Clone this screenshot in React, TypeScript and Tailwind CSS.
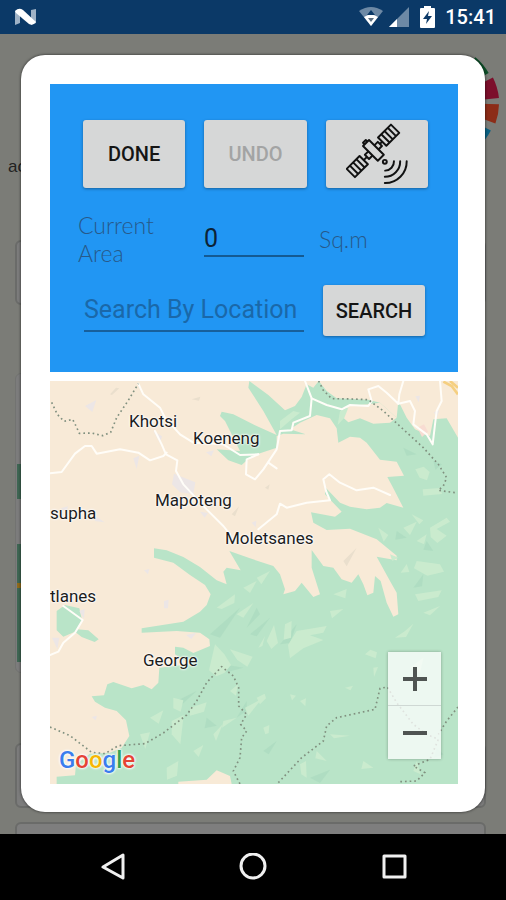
import React from "react";

const GREEN = "#b9e4c8";
const SAND = "#f8ead7";

const lightPatches = [
  "M690 120l40-30 20 5-25 20-35 30z", "M870 90l25-10-12 30-20 22z", "M1096 265l25-8 18 16-8 25-22-8z",
  "M1118 325l52-4 6 18-56 5z", "M1140 440l50-30 10 12-40 22 30 20-28 22-20-18z", "M1100 540l70 10 12 22-50 12-40-22z",
  "M1085 400l35 18-12 12z", "M1060 440l40-18-20 40z", "M1052 575l18-26 8 24z", "M985 440l30 22-14 20z",
  "M1100 480l30-20-8 30z", "M1020 520l25 10-18 10z", "M1095 640l80-12-10 20-60 12z", "M1120 695l50-20-30 28z",
  "M1035 770l30-20 25-22-22 40z", "M740 750l90-15-10 20-40 8 40 14-60 25-40 30-6-40z", "M705 730l20-10-2 50-22 6z",
  "M650 780l22-48 12 54-20 18z", "M625 800l20-35-8 30z", "M840 690l40-6-34 28z", "M850 640l40-16-4 28z",
  "M945 820l16-14 20 8-4 18z", "M970 860l14-2-12 30z", "M620 950l24-12 4 14-18 18z", "M720 940l18 4-12 14z",
  "M750 960l18-8-2 24z", "M640 1040l18-8-2 24-10 4z", "M885 920l24-6-8 14z", "M840 1060l60 4-48 8z",
  "M495 790l28 30 20 32-20 24-24 10-22-18z", "M540 805l68 22-16 30-30-20z", "M500 680l55-40-2 26-38 18z",
  "M420 980l50-16-8 28-42 12z", "M370 950l30 8-8 34-22-10z", "M365 1020l36-18-10 88-26-30z",
  "M300 1010l40-22-14 40z", "M270 1060l30-6-14 50z", "M350 1160l35-20-4 44-30 12z", "M490 1060l28-30-20 50z",
  "M520 1020l40-10-44 30z", "M585 980l50-26-40 50z", "M430 1110l30-18-14 36z", "M560 700l50-34-30 44z",
  "M540 930l24-20-6 34z", "M750 1150l18-10 2 50-16-10z", "M800 1110l30 30-34-8z", "M940 1140l30 20-36 4z",
  "M1090 1170l10-30 12 40z", "M580 620l40-20-20 36z", "M620 590l40-20-26 40z", "M1080 860l40-30-10 46z",
];

const darkPatches = [
  "M480 760l90-80-60 90z", "M600 760l60-50-40 56z", "M520 850l60 10-50 14z", "M380 960l60-30-48 44z",
  "M590 740l30-60 10 20z", "M1040 450l30 20-34 6z", "M1130 480l20 30-30-4z", "M1150 240l26 10-20 16z",
  "M560 1010l30-50 0 30z", "M780 1190l60-24-30 40z", "M640 1110l40-30-24 40z", "M690 790l50-60-20 56z",
  "M1090 620l30-40-4 36z", "M470 1010l30 24-36 8z", "M1060 200l40 20-30 4z", "M1160 1100l20 20-28 10z",
];

const townPatches = [
  "M105 75l34-18-12 36z", "M372 278l64 26-6 36-40-6-24-24z", "M250 232l18-8-8 40z", "M310 150l26 16-6 20z",
  "M32 382l22-6-4 16z", "M140 408l24 16-30-4z", "M282 568l16-4-4 16z", "M468 214l24-6-8 18z",
  "M342 660l14-4-2 26-12 0z", "M88 690l16-6-2 30z", "M6 770l22 0-6 34z", "M408 762l30-6-14 18z",
  "M125 1008l16-4-4 14z", "M450 392l24 4-10 14z", "M605 425l14-6-2 20z", "M1096 46l14-2-4 20z", "M1152 94l16-6-8 22z",
];

const borders = [
  "M5 64L22 100 42 121 68 115 78 135 88 157 125 156 158 164 182 154 200 110 235 58 265 8",
  "M806 0L820 28 845 53 905 54 955 56 1000 90 1060 145 1120 200 1165 250 1190 290 1180 315 1165 328 1215 335",
  "M0 1038L60 1064 125 1114 165 1118 205 1094 285 1088 340 1056 410 1002 440 960 470 905 515 857 550 885 566 920 566 975 590 1000 572 1030 590 1050 575 1070 570 1130 550 1170 570 1209",
  "M685 1205L755 1130 820 1080 830 1035 860 1010 975 985 990 922 1012 918 1040 965 1090 1030 1130 1060 1165 1075 1140 1135 1090 1155 1125 1175 1100 1200 1050 1202",
  "M1224 978L1190 1020 1165 1060",
];

const roads = [
  "M0 277L35 273 75 218 105 195 125 195 140 218 210 205 265 215 300 238 340 225 350 215",
  "M265 8L280 40 330 80 345 110 390 160 430 185 520 190 570 222 625 220",
  "M315 150L335 190 348 220 382 238 378 270 400 310 470 385 520 435 540 460",
  "M625 220L590 235 588 280 615 295 640 265 680 205 690 150 725 148 730 125 780 105 785 52 765 0",
  "M785 52L830 72 875 85 900 72 955 75 965 60 955 25 985 15 1010 35 1045 68 1048 40 1060 0",
  "M1045 68L1080 60 1095 90 1090 130 1130 160 1148 190 1155 130 1160 90 1175 60 1170 0",
  "M655 245L680 262", "M625 445L680 400 690 368 710 380 770 365 840 358 828 330 820 295 838 280 870 305 920 328 970 320 1020 342",
  "M40 675L98 717 75 755 40 785 25 812 0 822",
];

function Terrain() {
  return (
    <svg className="block h-full w-full" viewBox="0 0 1224 1209" preserveAspectRatio="xMidYMid slice" aria-hidden="true">
      <rect width="1224" height="1209" fill={SAND} />
      <path fill={GREEN} d="M598 0L655 42 705 88 735 75 755 48 770 10 790 20 806 0 830 30 860 52 955 56 990 65 1040 110 1045 60 1070 110 1095 145 1140 165 1150 115 1190 112 1224 170V1209H545L540 1185 500 1168 470 1196 385 1202V1209H20V1187L75 1183 78 1150 120 1118 180 1115 215 1100 238 1065 228 1018 200 990 165 980 135 962 125 946 162 943 172 910 190 903 245 922 280 912 305 925 325 905 328 860 420 850 375 820V797L400 800 430 816 480 795 478 775 450 755 380 750 275 755V742L400 722 450 692 470 672 482 640 465 612 420 582 370 545 312 530V502L350 508 400 528 450 558 500 598 530 610 520 572 530 560 572 568 538 510 600 532 670 555 690 580 705 625 700 640 735 630 755 605 790 648 810 640 785 560 785 507 820 555 850 560 875 595 905 605 925 580 940 610 952 643 970 635 975 585 992 600 1010 665 1030 707 1045 700 1040 635 1020 600 980 527 1040 538V524L980 475 900 443 830 447 790 425 783 394 855 407 875 392 825 340 825 318 870 365 900 377 950 385 990 380 1010 366 1060 380 1030 322 1012 288 1062 284 1040 242 990 236 950 185 930 170 900 167 865 185 860 142 840 112 800 102 750 125 720 145 767 160 700 158 680 165V200L605 225 575 252 535 238 500 205 570 210 560 190 525 120 510 105 515 92 550 100 620 135 680 162 640 90 595 20z" />
      <path fill={SAND} d="M893 75L955 70 990 65 1040 110 1020 125 970 128 930 112 895 124 880 110z" />
      <path fill={GREEN} d="M20 690L45 672 88 682 96 717 80 745 115 748 146 775 134 783 95 768 75 752 40 767 20 748z" />
      {darkPatches.map((d) => <path key={d} d={d} fill="#a9d9be" opacity="0.6" />)}
      {lightPatches.map((d) => <path key={d} d={d} fill="#caebce" />)}
      {townPatches.map((d) => <path key={d} d={d} fill="#ece6e6" />)}
      <path d="M180 40l18-20 10 2-22 20zM425 55l26-8-4 12zM545 400l22-24-12 30zM645 320l14-10-4 16zM880 540l40-40-30 56z" fill="#eadfcd" />
      <path d="M1102 140l20-10 12 22-18 16z" fill="#f8dcd2" />
      {roads.map((d) => (
        <path key={d} d={d} fill="none" stroke="#fffdf8" strokeWidth="6" strokeLinejoin="round" strokeLinecap="round" />
      ))}
      <path d="M1180 2L1205 15 1224 40M1200 0L1224 20" fill="none" stroke="#f5cf80" strokeWidth="8" />
      {borders.map((d) => (
        <path key={d} d={d} fill="none" stroke="#80907f" strokeWidth="5" strokeDasharray="5 9" strokeLinejoin="round" />
      ))}
    </svg>
  );
}

function Satellite() {
  return (
    <svg className="h-[62px] w-[62px]" viewBox="914 126 190 190" fill="none" stroke="#111" strokeWidth="6" strokeLinejoin="round" aria-hidden="true">
      <g transform="translate(998 210) rotate(-45)">
        <path d="M-13-32H13V32H-13zM-6-32V-39H6V-32" />
        <path d="M13-9H28V9H13M28 0H38M-13-9H-28V9H-13M-28 0H-42" />
        <path d="M38-18H94V18H38zM52-18V18M66-18V18M80-18V18" />
        <path d="M-98-18H-42V18H-98zM-84-18V18M-70-18V18M-56-18V18" />
      </g>
      <circle cx="1033" cy="245" r="6" />
      <path strokeLinecap="round" d="M1061 243A28 28 0 0 1 1034 272M1080 243A47 47 0 0 1 1033 291M1100 243A66 66 0 0 1 1033 310" />
    </svg>
  );
}

function StatusBar() {
  return (
    <header className="flex h-[34px] items-center bg-[#0b3967] pr-[10px] pl-[15px] text-white">
      <svg className="h-[18px] w-[21px]" viewBox="0 0 21 18" aria-label="Android N">
        <path fill="#9fb2c6" d="M0 3l5-2v14l-5 2zM16 2l5-1v14l-5 2z" />
        <path fill="#fff" d="M0 3Q4-1 8 2L21 14Q18 18 14 16L1 5z" />
      </svg>
      <div className="ml-auto flex items-center">
        <svg className="h-5 w-6" viewBox="0 0 24 20" aria-label="Wi-Fi">
          <path fill="#6d89a5" d="M0 4Q12-4 24 4L12 19z" />
          <path fill="#fff" d="M5 10Q12 5 19 10L12 19z" />
          <path fill="#0b3967" d="M12 3l4 5H8z" />
          <path fill="#5c6f80" d="M12 15l-3-4h6z" />
        </svg>
        <svg className="ml-[6px] h-5 w-5" viewBox="0 0 20 20" aria-label="Signal">
          <path fill="#6d89a5" d="M20 0V20H0z" />
          <path fill="#fff" d="M8 12V20H0z" />
        </svg>
        <svg className="ml-[11px] h-[22px] w-[15px]" viewBox="0 0 15 22" aria-label="Charging">
          <path fill="#fff" d="M4 0h7v2h3q1 0 1 1v18q0 1-1 1H1q-1 0-1-1V3q0-1 1-1h3z" />
          <path fill="#0b3967" d="M9 5l-6 8h4l-1 5 6-8H8z" />
        </svg>
        <time className="ml-[10px] text-[20px] leading-6 font-medium">15:41</time>
      </div>
    </header>
  );
}

function PageBehind() {
  return (
    <div className="absolute inset-0 flex flex-col overflow-hidden pr-5 pl-[15px]" aria-hidden="true">
      <div className="relative h-[206px] shrink-0">
        <svg className="absolute top-[8px] -right-[14px] h-[120px] w-[120px]" viewBox="0 0 120 120" fill="none" strokeWidth="20">
          <path stroke="#0c4f28" d="M89 23A47 47 0 0 1 100 36" />
          <path stroke="#7c0f2b" d="M104 40A49 49 0 0 1 109 57" />
          <path stroke="#8c2c17" d="M109 62A49 49 0 0 1 106 78" />
          <path stroke="#0a6183" d="M102 84A47 47 0 0 1 92 97" />
        </svg>
        <p className="-ml-[7px] pt-[121px] font-['Liberation_Sans',sans-serif] text-[17px] leading-6 text-[#222]">ac</p>
      </div>
      <div className="h-[65px] shrink-0 rounded-md border-2 border-[#6a6b69] bg-[#7c7c7c]" />
      <div className="mt-[68px] h-[300px] shrink-0 rounded-md border border-[#727371] bg-[#7c7c7c] pt-[90px] pl-px">
        <div className="h-[35px] bg-[#3f6653]" />
        <div className="mt-[45px] h-[39px] bg-[#3f6653]" />
        <div className="h-[5px] bg-[#8f6a1a]" />
        <div className="h-[74px] bg-[#3f6653]" />
      </div>
      <div className="mt-[70px] h-[65px] shrink-0 rounded-md border-2 border-[#6a6b69] bg-[#7c7c7c]" />
      <div className="mt-[14px] h-[65px] shrink-0 rounded-md border-2 border-[#6a6b69] bg-[#7e7e7e]" />
    </div>
  );
}

const key = "rounded-[3px] bg-[#d6d7d7] text-[20px] font-medium text-[#151515] shadow-[0_1px_3px_rgba(0,0,0,0.35)]";
const place = "absolute text-[17px] leading-5 whitespace-nowrap text-[#1c1c1c] [text-shadow:0_0_2px_#fff,0_0_2px_#fff,0_0_3px_#fff]";

function AreaForm() {
  return (
    <form className="bg-[#2196f3] pt-9 pb-9" onSubmit={(e) => e.preventDefault()}>
      <div className="grid h-[68px] grid-cols-3 gap-[19px] pr-[30px] pl-[33px]">
        <button type="button" className={key}>DONE</button>
        <button type="button" disabled className="rounded-[3px] bg-[#d6d7d7] text-[20px] font-medium text-[#a3a4a4] shadow-[0_1px_3px_rgba(0,0,0,0.35)]">UNDO</button>
        <button type="button" aria-label="Satellite view" className={key + " flex items-center justify-center"}>
          <Satellite />
        </button>
      </div>
      <div className="mt-[23px] flex items-center pl-7 font-['Lato',sans-serif] text-[23px] leading-7 text-[#27598a]">
        <label htmlFor="area" className="w-[126px] pr-9 font-light">Current Area</label>
        <input id="area" defaultValue="0" className="h-9 w-[100px] border-b-2 border-[#145a92] bg-transparent font-['Roboto',sans-serif] text-[25px] text-[#0c2236] outline-none" />
        <span className="ml-[15px] font-light">Sq.m</span>
      </div>
      <div className="mt-[18px] flex items-center gap-[19px] pr-[33px] pl-[34px]">
        <input aria-label="Search By Location" placeholder="Search By Location" className="h-[43px] min-w-0 flex-1 border-b-2 border-[#175f9b] bg-transparent text-[25px] outline-none placeholder:text-[#1a68a9]" />
        <button type="submit" className={key + " h-[51px] w-[102px]"}>SEARCH</button>
      </div>
    </form>
  );
}

function AreaMap() {
  return (
    <section aria-label="Map" className="relative mt-[9px] h-[403px] overflow-hidden">
      <Terrain />
      <span className={place + " top-[30px] left-[79px]"}>Khotsi</span>
      <span className={place + " top-[47px] left-[143px]"}>Koeneng</span>
      <span className={place + " top-[109px] left-[105px]"}>Mapoteng</span>
      <span className={place + " top-[147px] left-[175px]"}>Moletsanes</span>
      <span className={place + " top-[122px] left-0"}>supha</span>
      <span className={place + " top-[205px] left-0"}>tlanes</span>
      <span className={place + " top-[269px] left-[93px]"}>George</span>
      <span className="absolute bottom-[8px] left-[9px] text-[24px] leading-8 font-medium [text-shadow:0_0_2px_#fff,0_0_3px_#fff,0_0_3px_#fff]">
        <span className="text-[#3b7ded]">G</span>
        <span className="text-[#e54335]">o</span>
        <span className="text-[#f6b704]">o</span>
        <span className="text-[#3b7ded]">g</span>
        <span className="text-[#34a353]">l</span>
        <span className="text-[#e54335]">e</span>
      </span>
      <div className="absolute right-[17px] bottom-[25px] flex w-[53px] flex-col divide-y divide-[#cfd8d4] bg-white/75 shadow-[0_0_3px_rgba(0,0,0,0.3)]">
        <button type="button" aria-label="Zoom in" className="flex h-[54px] items-center justify-center">
          <svg className="h-6 w-6" viewBox="0 0 24 24" stroke="#4f5452" strokeWidth="4" aria-hidden="true"><path d="M0 12H24M12 0V24" /></svg>
        </button>
        <button type="button" aria-label="Zoom out" className="flex h-[53px] items-center justify-center">
          <svg className="h-6 w-6" viewBox="0 0 24 24" stroke="#4f5452" strokeWidth="4" aria-hidden="true"><path d="M0 12H24" /></svg>
        </button>
      </div>
    </section>
  );
}

export default function App() {
  return (
    <div className="flex min-h-screen flex-col bg-black font-['Roboto',sans-serif]">
      <StatusBar />
      <main className="relative flex-1 bg-[#7b7c77] px-[21px] pt-[21px] pb-[22px]">
        <PageBehind />
        <div role="dialog" aria-label="Measure area" className="relative rounded-[24px] bg-white pt-[29px] pr-[27px] pb-7 pl-[29px] shadow-[0_0_3px_rgba(0,0,0,0.7)]">
          <AreaForm />
          <AreaMap />
        </div>
      </main>
      <nav className="flex h-[66px] items-center justify-center gap-[114px] text-[#f0f0f0]">
        <button type="button" aria-label="Back">
          <svg className="h-7 w-[26px]" viewBox="0 0 26 28" fill="none" stroke="currentColor" strokeWidth="3" strokeLinejoin="round"><path d="M24 2V25L4 14z" /></svg>
        </button>
        <button type="button" aria-label="Home">
          <svg className="h-7 w-7" viewBox="0 0 28 28" fill="none" stroke="currentColor" strokeWidth="3"><circle cx="14" cy="13" r="12" /></svg>
        </button>
        <button type="button" aria-label="Recent apps">
          <svg className="h-7 w-[26px]" viewBox="0 0 26 28" fill="none" stroke="currentColor" strokeWidth="3" strokeLinejoin="round"><path d="M3 3H24V24H3z" /></svg>
        </button>
      </nav>
    </div>
  );
}
